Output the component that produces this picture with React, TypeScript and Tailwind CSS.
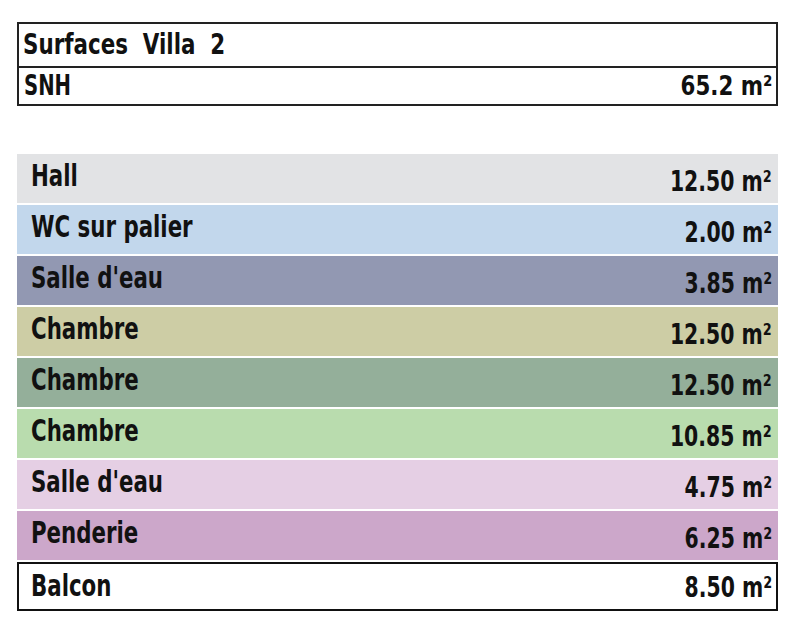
const rooms = [
  { name: 'Hall', area: '12.50', bg: 'bg-[#e2e3e5]' },
  { name: 'WC sur palier', area: '2.00', bg: 'bg-[#c2d7ec]' },
  { name: "Salle d'eau", area: '3.85', bg: 'bg-[#9298b2]' },
  { name: 'Chambre', area: '12.50', bg: 'bg-[#cdcda5]' },
  { name: 'Chambre', area: '12.50', bg: 'bg-[#94af9a]' },
  { name: 'Chambre', area: '10.85', bg: 'bg-[#b9dcae]' },
  { name: "Salle d'eau", area: '4.75', bg: 'bg-[#e5cfe4]' },
  { name: 'Penderie', area: '6.25', bg: 'bg-[#cca7ca]' },
];

// no condensed DIN available: DejaVu Sans Condensed squeezed a bit more
const font = 'font-["DejaVu_Sans_Condensed","DejaVu_Sans",sans-serif]';

function RoomRow({ name, area, bg, boxed }: { name: string; area: string; bg: string; boxed?: boolean }) {
  return (
    <div
      className={`flex h-[49px] items-stretch justify-between ${bg} ${
        boxed ? 'border-2 border-[#111] pl-[12px] pr-[4px]' : 'pl-[14px] pr-[6px]'
      }`}
    >
      <div className="pt-[4px] text-[30px] leading-[36px] font-bold whitespace-nowrap">
        <span className="inline-block origin-left scale-x-[0.79]">{name}</span>
      </div>
      <div className="flex items-end pb-[5px] text-[28px] leading-[32px] font-bold whitespace-nowrap">
        <span className="inline-block origin-right scale-x-[0.81]">{area} m²</span>
      </div>
    </div>
  );
}

export default function App() {
  return (
    <div className={`h-[638px] w-[800px] bg-white pl-[17px] pr-[22px] pt-[22px] text-[#111] ${font}`}>
      {/* Summary box */}
      <div className="border-2 border-[#222]">
        <div className="flex h-[44px] items-center border-b-2 border-[#222] pl-[4px] text-[28px] font-bold whitespace-pre">
          <span className="inline-block origin-left scale-x-[0.85]">{'Surfaces  Villa  2'}</span>
        </div>
        <div className="flex h-[36px] items-center justify-between pl-[5px] pr-[4px] text-[28px] font-bold">
          <span className="inline-block origin-left scale-x-[0.78]">SNH</span>
          <span className="inline-block origin-right scale-x-[0.88] text-[27px]">65.2 m²</span>
        </div>
      </div>

      {/* Rooms */}
      <div className="mt-[48px] flex flex-col gap-[2px]">
        {rooms.map((r, i) => (
          <RoomRow key={i} {...r} />
        ))}
        <RoomRow name="Balcon" area="8.50" bg="bg-white" boxed />
      </div>
    </div>
  );
}
